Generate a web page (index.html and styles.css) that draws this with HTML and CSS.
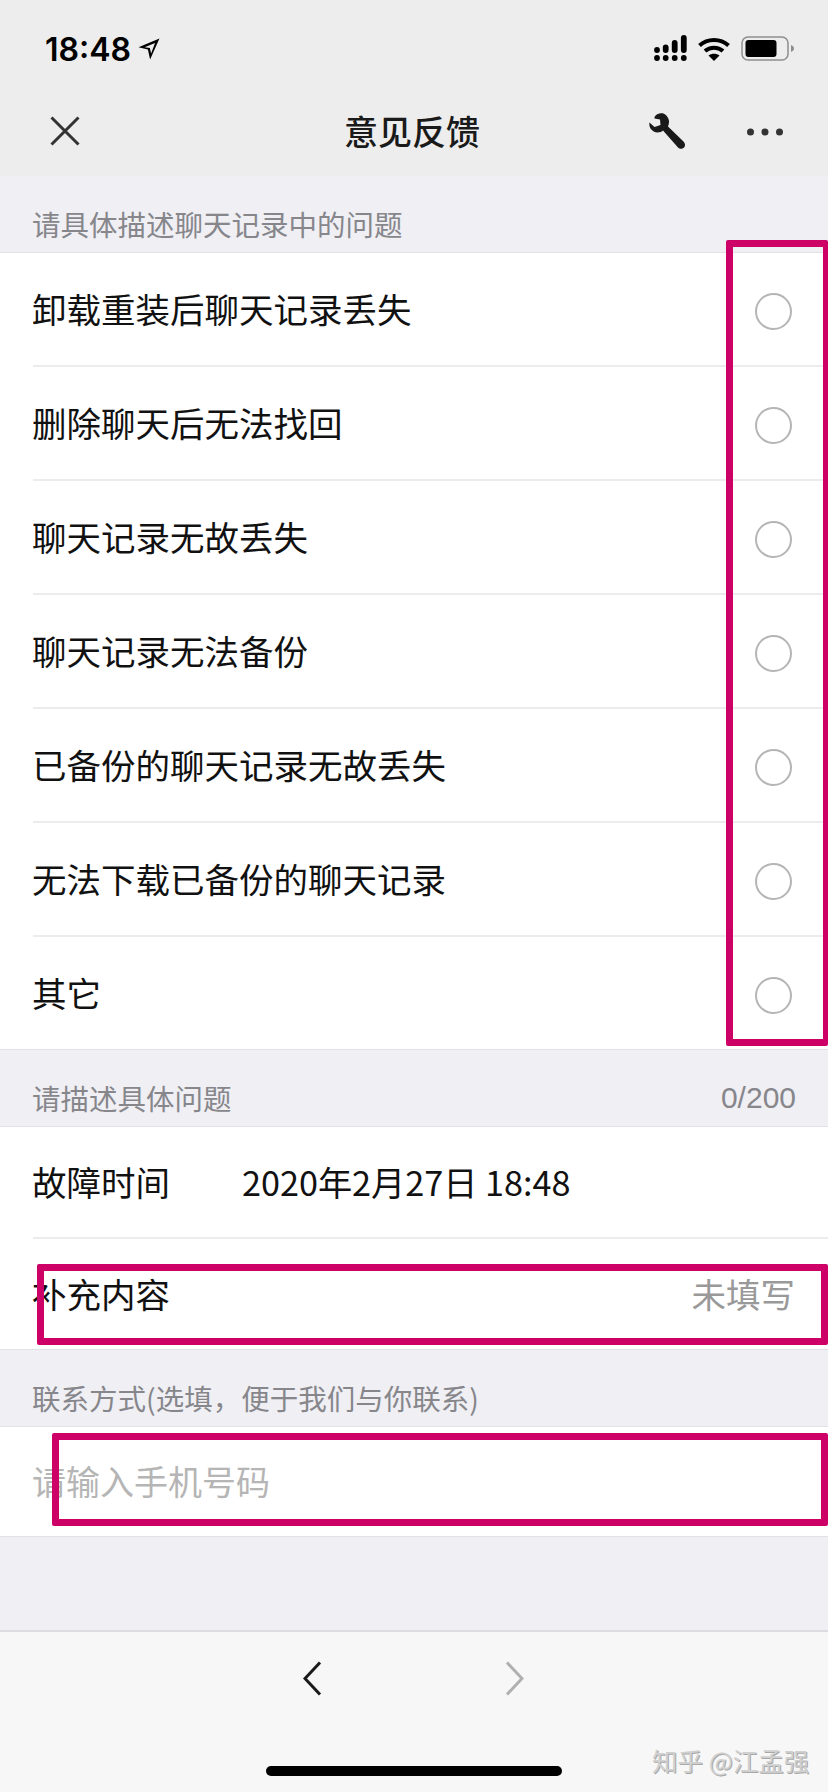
FILE: index.html
```html
<!DOCTYPE html>
<html lang="zh-CN">
  <head>
    <meta charset="UTF-8" />
    <title>意见反馈</title>
    <link rel="stylesheet" href="styles.css">
  </head>
  <body>
    <div class="page">
      <header class="top">
        <div class="status">
          <div class="clock">
            <span>18:48</span>
            <svg class="arrow" width="22" height="22" viewBox="0 0 20 20"><path d="M19.500 0.500 L0.500 8.500 L9 10.500 L11 19.500 Z M15.500 4.500 L6 8.300 L10.800 9.200 L11.900 14 Z" fill="#000" fill-rule="evenodd"/></svg>
          </div>
          <div class="status-icons">
            <svg width="33" height="26" viewBox="0 0 33 26" fill="#000">
              <circle cx="3" cy="23" r="2.900"/><circle cx="11.700" cy="23" r="2.900"/><circle cx="20.700" cy="23" r="2.900"/><circle cx="29.800" cy="23" r="2.900"/>
              <circle cx="3" cy="15" r="2.900"/><rect x="8.800" y="9.500" width="5.800" height="8.500" rx="2.900"/><rect x="17.800" y="5" width="5.800" height="13" rx="2.900"/><rect x="26.900" y="0" width="5.800" height="18" rx="2.900"/>
            </svg>
            <svg width="32" height="24" viewBox="0 0 32 24" fill="none" stroke="#000" stroke-width="4">
              <path d="M1.500 8.500 C9.500 1 22.500 1 30.500 8.500"/>
              <path d="M7 14 C12 9.500 20 9.500 25 14"/>
              <path d="M16 24 L10.500 18.500 C13.500 16 18.500 16 21.500 18.500 Z" fill="#000" stroke="none"/>
            </svg>
            <svg width="53" height="25" viewBox="0 0 53 25">
              <rect x="1" y="1" width="46" height="23" rx="6" fill="none" stroke="#8e8e8e" stroke-width="1.500"/>
              <rect x="4.500" y="4" width="31" height="17" rx="3" fill="#000"/>
              <path d="M50 9 C52 10 53 11 53 12.500 C53 14 52 15 50 16 Z" fill="#8e8e8e"/>
            </svg>
          </div>
        </div>
        <nav class="nav">
          <svg class="close" width="30" height="30" viewBox="0 0 30 30"><path d="M1.500 1.500 L28.500 28.500 M28.500 1.500 L1.500 28.500" stroke="#333" stroke-width="3" fill="none"/></svg>
          <div class="title">意见反馈</div>
          <svg class="wrench" width="36" height="36" viewBox="0 0 36 36">
            <path d="M14.500 0.500 C9.500 -0.500 5 2.500 5.500 5.500 L11 6.500 L11.500 12 L5.500 14 L0.500 9.500 C-0.500 14.500 3 19 8.500 19.500 C11 19.500 13 18.500 14 17.500 L29 34.500 C31 36.500 34 36 35.500 34 C36.500 32 36 30 34.500 28.500 L19 13.500 C20 11 20.500 8.500 19.500 6 C18.500 3.500 17 1.500 14.500 0.500 Z" fill="#1a1a1a"/>
          </svg>
          <svg class="more" width="36" height="8" viewBox="0 0 36 8" fill="#333"><circle cx="3.500" cy="4" r="3.500"/><circle cx="18" cy="4" r="3.500"/><circle cx="32.500" cy="4" r="3.500"/></svg>
        </nav>
      </header>

      <div class="section-label"><span>请具体描述聊天记录中的问题</span></div>
      <ul class="list options">
        <li class="row"><span>卸载重装后聊天记录丢失</span><i class="radio"></i></li>
        <li class="row"><span>删除聊天后无法找回</span><i class="radio"></i></li>
        <li class="row"><span>聊天记录无故丢失</span><i class="radio"></i></li>
        <li class="row"><span>聊天记录无法备份</span><i class="radio"></i></li>
        <li class="row"><span>已备份的聊天记录无故丢失</span><i class="radio"></i></li>
        <li class="row"><span>无法下载已备份的聊天记录</span><i class="radio"></i></li>
        <li class="row"><span>其它</span><i class="radio"></i></li>
      </ul>

      <div class="section-label"><span>请描述具体问题</span><span class="count">0/200</span></div>
      <ul class="list details">
        <li class="row">
          <span class="field-name">故障时间</span>
          <span class="field-value">2020年2月27日 18:48</span>
        </li>
        <li class="row">
          <span class="field-name">补充内容</span>
          <span class="unfilled">未填写</span>
        </li>
      </ul>

      <div class="section-label"><span>联系方式(选填，便于我们与你联系)</span></div>
      <ul class="list contact">
        <li class="row"><span class="placeholder">请输入手机号码</span></li>
      </ul>

      <footer class="toolbar">
        <div class="toolbar-btns">
          <svg width="19" height="35" viewBox="0 0 19 35"><path d="M17 1.500 L2 17.500 L17 33.500" fill="none" stroke="#1a1a1a" stroke-width="3"/></svg>
          <svg width="19" height="35" viewBox="0 0 19 35"><path d="M2 1.500 L17 17.500 L2 33.500" fill="none" stroke="#b0b0b0" stroke-width="3"/></svg>
        </div>
        <div class="home-bar"></div>
      </footer>

      <!-- red marks drawn on top of the screenshot -->
      <div class="mark mark-radios"></div>
      <div class="mark mark-extra"></div>
      <div class="mark mark-phone"></div>
      <div class="watermark">知乎 @江孟强</div>
    </div>
  </body>
</html>
```

FILE: styles.css
```css
* {
  box-sizing: border-box;
}

body {
  margin: 0;
  font-family: "Liberation Sans", "Noto Sans CJK SC", sans-serif;
  background: #efeff4;
  color: #111;
}

.page {
  position: relative;
  width: 828px;
  height: 1792px;
  overflow: hidden;
  display: flex;
  flex-direction: column;
}

.top {
  height: 176px;
  background: #ededed;
}

.status {
  height: 88px;
  padding: 0 34px 0 45px;
  display: flex;
  justify-content: space-between;
  align-items: flex-end;
}

.clock {
  display: flex;
  align-items: center;
  gap: 7px;
  font-family: Inter, sans-serif;
  font-size: 32px;
  font-weight: 600;
  height: 44px;
  margin-bottom: 17px;
  color: #000;
}

.status-icons {
  display: flex;
  align-items: flex-end;
  gap: 11px;
  margin-bottom: 27px;
}

.nav {
  height: 88px;
  padding-left: 50px;
  display: flex;
  align-items: center;
}

.close {
  margin-top: -3px;
}

.title {
  width: 135px;
  margin-left: 264px;
  margin-right: 1px;
  margin-top: -4px;
  font-family: "Noto Sans CJK SC", sans-serif;
  font-size: 34px;
  font-weight: 500;
  color: #1a1a1a;
  white-space: nowrap;
}

.wrench {
  margin-left: 169px;
  margin-top: -3px;
}

.more {
  margin-left: 62px;
  margin-top: -1px;
}

.section-label {
  height: 76px;
  padding: 26px 32px 0 32px;
  display: flex;
  justify-content: space-between;
  font-family: "Noto Sans CJK SC", sans-serif;
  font-size: 28.500px;
  line-height: 44px;
  color: #86868b;
}

.count {
  font-family: "Liberation Sans", sans-serif;
  font-size: 30px;
}

.list {
  margin: 0;
  padding: 0 0 0 33px;
  list-style: none;
  background: #fff;
  border-top: 1px solid #e2e2e6;
  border-bottom: 1px solid #e2e2e6;
  font-family: "Noto Sans CJK SC", sans-serif;
  font-size: 34.500px;
}

.row {
  display: flex;
  align-items: center;
  justify-content: space-between;
  padding-right: 33px;
  border-bottom: 2px solid #ececee;
}

.row:last-child {
  border-bottom: none;
}

.row span {
  margin-left: -1px;
  margin-top: -3px;
}

.options .row {
  height: 114px;
  padding-right: 36px;
}

.options .row:last-child {
  height: 112px;
}

.details .row {
  height: 112px;
}

.details .row:last-child {
  height: 110px;
}

.contact .row {
  height: 109px;
}

.radio {
  width: 37px;
  height: 37px;
  border: 2px solid #b5b5b5;
  border-radius: 50%;
  margin-top: 4px;
}

.field-name {
  width: 211px;
}

.field-value {
  flex: 1;
  font-size: 34.200px;
  white-space: nowrap;
}

.unfilled {
  color: #999;
}

.placeholder {
  font-size: 34px;
  color: #b5b5b5;
}

.toolbar {
  margin-top: auto;
  height: 162px;
  background: #f7f7f7;
  border-top: 2px solid #dcdce2;
  display: flex;
  flex-direction: column;
  align-items: center;
}

.toolbar-btns {
  width: 828px;
  padding: 29px 0 0 303px;
  display: flex;
  gap: 183px;
}

.home-bar {
  width: 296px;
  height: 10px;
  margin-top: 70px;
  background: #000;
  border-radius: 5px;
}

.mark {
  position: absolute;
  border: 7px solid #cc0066;
  border-radius: 2px;
}

.mark-radios {
  left: 726px;
  top: 240px;
  width: 102px;
  height: 806px;
  border-right-width: 5px;
}

.mark-extra {
  left: 37px;
  top: 1264px;
  width: 791px;
  height: 81px;
}

.mark-phone {
  left: 52px;
  top: 1433px;
  width: 776px;
  height: 93px;
}

.watermark {
  position: absolute;
  left: 652px;
  top: 1744px;
  font-family: "Noto Sans CJK SC", sans-serif;
  font-size: 25.500px;
  line-height: 32px;
  color: #d0d0d0;
  text-shadow: 1px 1px 0 #a8a8a8;
  white-space: nowrap;
}
```
